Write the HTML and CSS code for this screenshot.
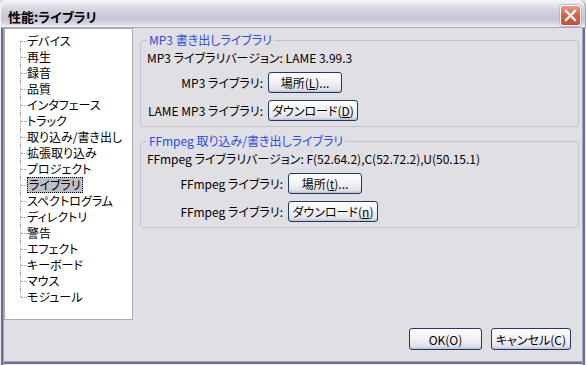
FILE: index.html
```html
<!DOCTYPE html>
<html lang="ja">
<head>
    <meta charset="UTF-8">
    <title>性能:ライブラリ</title>
    <link rel="stylesheet" href="styles.css">
</head>
<body>

<div class="window">
    <div class="titlebar">
        <span class="title">性能:ライブラリ</span>
        <span class="close">
            <svg width="13" height="13" viewBox="0 0 13 13">
                <path d="M2 2 L11 11 M11 2 L2 11" stroke="#fff" stroke-width="2.4" stroke-linecap="square"/>
            </svg>
        </span>
    </div>
    <div class="client">
        <div class="main">
            <ul class="tree">
                <li>デバイス</li>
                <li>再生</li>
                <li>録音</li>
                <li>品質</li>
                <li>インタフェース</li>
                <li>トラック</li>
                <li>取り込み/書き出し</li>
                <li>拡張取り込み</li>
                <li>プロジェクト</li>
                <li><span class="selected">ライブラリ</span></li>
                <li>スペクトログラム</li>
                <li>ディレクトリ</li>
                <li>警告</li>
                <li>エフェクト</li>
                <li>キーボード</li>
                <li>マウス</li>
                <li>モジュール</li>
            </ul>
            <div class="pane">
                <fieldset class="group">
                    <legend>MP3 書き出しライブラリ</legend>
                    <div class="version">MP3 ライブラリバージョン: LAME 3.99.3</div>
                    <div class="rows rows-mp3">
                        <label>MP3 ライブラリ:</label>
                        <button class="btn btn-locate">場所(<u>L</u>)...</button>
                        <label>LAME MP3 ライブラリ:</label>
                        <button class="btn btn-download">ダウンロード(<u>D</u>)</button>
                    </div>
                </fieldset>
                <fieldset class="group">
                    <legend>FFmpeg 取り込み/書き出しライブラリ</legend>
                    <div class="version">FFmpeg ライブラリバージョン: F(52.64.2),C(52.72.2),U(50.15.1)</div>
                    <div class="rows rows-ffmpeg">
                        <label>FFmpeg ライブラリ:</label>
                        <button class="btn btn-locate">場所(<u>t</u>)...</button>
                        <label>FFmpeg ライブラリ:</label>
                        <button class="btn btn-download">ダウンロード(<u>n</u>)</button>
                    </div>
                </fieldset>
            </div>
        </div>
        <div class="footer">
            <button class="btn btn-ok">OK(O)</button>
            <button class="btn btn-cancel">キャンセル(C)</button>
        </div>
    </div>
</div>

</body>
</html>
```

FILE: styles.css
```css
body {
    margin: 0;
    font-family: "Noto Sans CJK JP", sans-serif;
    font-size: 12px;
    font-feature-settings: "palt";
    color: #000;
    background-color: #e0dfe3;
}
.window {
    width: 586px;
    height: 365px;
    box-sizing: border-box;
    display: flex;
    flex-direction: column;
    background-color: #e0dfe3;
}
.titlebar {
    height: 28px;
    flex: none;
    display: flex;
    align-items: center;
    justify-content: space-between;
    padding: 0 5px 0 8px;
    border-radius: 7px 7px 0 0;
    box-shadow: inset 1px 1px 0 #f4f4f8, inset -1px 0 0 #9d9db4;
    background: linear-gradient(to bottom, #fcfcfd 0, #ebebf1 3px, #d7d7e2 9px, #c6c6d6 17px, #cacad9 21px, #e2e2ea 25px, #f1f1f5 27px, #a9a9bd 27px, #a9a9bd 28px);
}
.title {
    font-weight: bold;
    font-size: 13px;
    padding-top: 4px;
}
.close {
    width: 19px;
    height: 19px;
    margin-top: 3px;
    display: flex;
    align-items: center;
    justify-content: center;
    border: 1px solid #fff;
    border-radius: 3px;
    background: linear-gradient(to bottom, #ec9987, #d8644a 45%, #c64e33);
    box-shadow: 0 0 0 1px #b9b9c9;
}
.client {
    flex: 1;
    display: flex;
    flex-direction: column;
    padding: 0 4px 4px 4px;
    box-shadow: inset 1px 0 #ececf2, inset 3px 0 #6c6c8e, inset 4px 0 #a3a3bb,
                inset -1px 0 #ececf2, inset -3px 0 #6c6c8e, inset -4px 0 #a3a3bb,
                inset 0 -1px #ececf2, inset 0 -3px #6c6c8e, inset 0 -4px #a3a3bb;
}
.main {
    display: flex;
    height: 292px;
}
.tree {
    width: 129px;
    box-sizing: border-box;
    margin: 0;
    padding: 4px 0 0 0;
    list-style: none;
    background-color: #fff;
    border: 1px solid #a5acb2;
}
.tree li {
    position: relative;
    height: 16px;
    line-height: 16px;
    padding-left: 22px;
    white-space: nowrap;
}
.tree li::before {
    content: "";
    position: absolute;
    left: 15px;
    top: 0;
    bottom: 0;
    border-left: 1px dotted #a0a0a0;
}
.tree li:first-child::before {
    top: 8px;
}
.tree li:last-child::before {
    bottom: 8px;
}
.tree li::after {
    content: "";
    position: absolute;
    left: 16px;
    top: 8px;
    width: 6px;
    border-top: 1px dotted #a0a0a0;
}
.tree li span {
    display: inline-block;
    padding: 0 1px;
    border: 1px dotted transparent;
    line-height: 14px;
}
.tree li .selected {
    background-color: #bcbecb;
    border-color: #000;
}
.pane {
    flex: 1;
    padding: 4px 3px 0 7px;
}
.group {
    margin: 0 0 6px 0;
    padding: 0 6px 5px 6px;
    border: 1px solid #c3c3ca;
    border-radius: 3px;
}
.group legend {
    padding: 0 2px;
    color: #2a4ce3;
    line-height: 16px;
}
.version {
    line-height: 16px;
    margin-top: 2px;
    white-space: nowrap;
}
.rows {
    display: grid;
    column-gap: 5px;
    row-gap: 7px;
    margin-top: 6px;
    align-items: center;
}
.rows-mp3 {
    grid-template-columns: 116px auto;
}
.rows-ffmpeg {
    grid-template-columns: 136px auto;
}
.rows label {
    text-align: right;
    white-space: nowrap;
}
.btn {
    height: 21px;
    padding: 0;
    font-family: inherit;
    font-size: 12px;
    font-feature-settings: "palt";
    color: #000;
    border: 1px solid #1c3b6b;
    border-radius: 3px;
    background: linear-gradient(to bottom, #ffffff, #f2f2f5 50%, #e1e1e9 85%, #c9c9d6);
    box-shadow: inset 0 -1px 0 #c4c4d2;
    justify-self: start;
}
.btn u {
    text-underline-offset: 1px;
}
.btn-locate {
    width: 74px;
}
.btn-download {
    width: 90px;
}
.footer {
    display: flex;
    justify-content: flex-end;
    gap: 9px;
    padding: 8px 11px 0 0;
}
.footer .btn {
    height: 22px;
}
.btn-ok {
    width: 73px;
}
.btn-cancel {
    width: 80px;
}
```
